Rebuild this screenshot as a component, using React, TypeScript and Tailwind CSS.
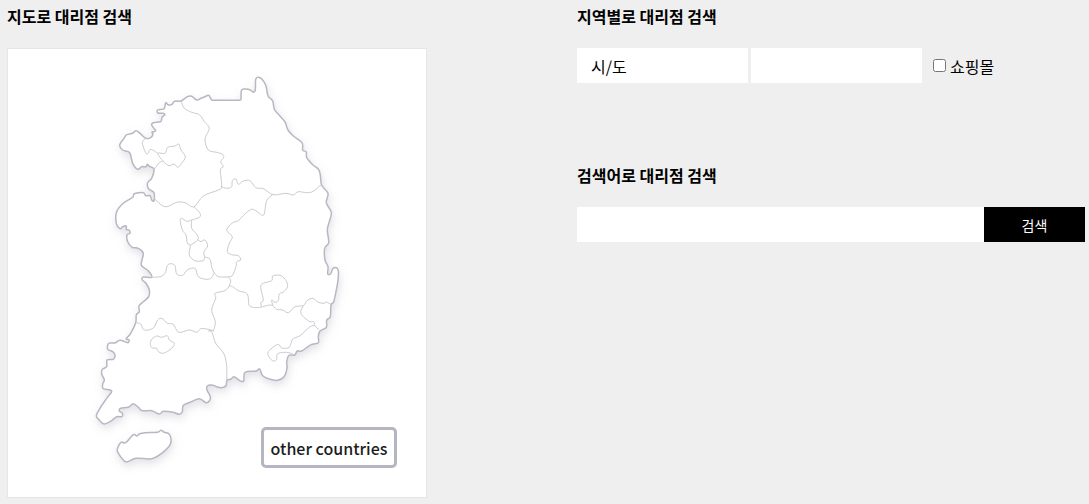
import React from "react";

const MAINLAND =
  "145.7,138.3 150.7,137.7 153,134.3 152,132.3 155.7,130.7 151.7,125.3 153.3,122.7 160.7,121.7 162,117.3 164.7,115 163.3,113.3 158,113 157.7,110 164,108.7 165.7,102.7 168,104.7 171.7,104.7 174.7,101.3 181,101 187.3,96.7 191.7,96.3 196.7,100 201,98.3 205,96.7 208.7,95.3 211.5,99.8 214,100.2 226,100.2 239.3,100.2 241,98.3 241.3,90.7 244,89 248.3,89.3 251.3,90.7 253.3,92.3 255.3,90 255.7,79.3 258.3,77.3 262,79.3 266,86 268,96 272.7,101 274.3,109.3 279.3,115.3 285,122 288,130 293.3,136 302,142.7 302.7,150 306.3,152 306.7,157.7 312.7,164.7 318.3,169 320.3,175 321.7,185.3 328,193.3 326.3,202.7 331.3,212.3 329.3,221.7 327.3,230 328.7,242.7 324.7,248.3 325,260 328,266.7 327.7,274 330.7,273.7 332.7,268.7 336.3,267.7 338.3,270.7 338,280 336,291.7 333.7,301.7 331,305 330.3,316.7 326.7,320 326.3,327.3 320,331 318.3,336.7 318.3,342.7 311,344.7 301.7,351 297.3,351 294.7,355 289,355.3 286.7,361.7 287,368.3 284,376.7 277.7,380.3 270,379.3 262.7,375.7 259.7,369 256,371 245,372.3 243.7,381 240,380.7 234,376.7 230.7,379.3 227,380 226,385.7 221.7,387.7 216.7,386.7 211.7,385 207.3,386 207,390 210.3,396.7 209.3,401 206,402.7 199.3,398.7 190,402.3 183.3,405.3 182.3,411.7 179.3,414.3 173.3,412.3 163.3,411.3 159.3,414 151.7,410.7 142.3,410.7 138.3,407.3 133.3,403.7 128.3,407.3 120.7,408.3 119.3,411 122.3,413.3 121.7,416.7 116.7,416.7 110,421.7 104,424 100,420.7 96.3,416 100,408.3 106.7,398.3 111.7,391 103.3,388.7 102.7,384 104.3,380 101.7,374 102.3,369.3 106.7,366.7 107,360 113.3,359.3 115,355 112.7,351.7 107.7,349.3 108.7,343.3 115,343 120,340.3 127.7,342.7 129,340 126.3,338.7 130.7,333.3 135.7,322.7 136.3,315 139.3,311.7 139,306 143.3,301.7 148.7,296.7 149.3,290 146,283.3 142.3,280 143.3,277 151.7,277.3 148.3,270.7 141.3,265 143.3,253.3 138.3,248.3 132.3,247.3 127.7,241.7 127,235 130,233.3 129,230 126.3,229.3 126.3,226 122.7,226.7 120,228.7 116.3,223.3 116.7,211.7 123.3,203.3 132.7,197.3 134.3,193.7 143.3,192.7 145.7,195.7 150,195.7 151.7,200 154,200.7 154,192.7 149,189.3 147.3,185 148.3,181.7 151.7,178.3 154,169 150,166.7 147.3,164.3 146,166.7 141.7,166.7 137.7,169.3 132.7,163.3 129.7,152.7 122.7,150 119.7,145 124,138.3 126.7,134.7 132.7,133.3 136,130.7 140,133.3";

const JEJU =
  "117.3,449.3 121,442.3 125.7,442.7 133.3,434.7 136.7,436 139.3,434 145,432.7 157.3,432.3 161,430.3 164.3,432.3 168.3,433.3 170.7,437.3 170.3,444.3 161.7,453.3 151.7,458.7 136,458.3 126.7,462 122.7,459.3 118,452.7";

const GWANGJU =
  "150.3,343.3 152,339 156.7,336 161.7,337.3 167.3,335.7 169.3,340 174.3,343.3 171.7,348.3 163.3,353.3 157.7,351 156.7,348.3 151.7,347.7";

const SEOUL =
  "157.7,153.3 165,153.3 167.7,147.3 175,146 178.7,144 181,150 185.3,156.7 181.7,163.3 177.7,167.3 174,164 169,165.7 163.3,161.3";

const BORDERS = [
  "181,101 184.3,108.3 191.7,112.3 199.3,114.7 204.3,121.7 209.3,128.3 205,139.3 208.3,150 216.7,152.3 222.3,154.3 223.7,157.3 220.7,161.7 223.3,166.7 220.3,170 221.7,186 218.3,190 203.3,196 194,206.7 185,202.7 176.7,202.3 165,206.7 154,198.3",
  "221.3,186.7 226.7,188.3 231.7,186.7 232.3,180.7 236,179 238.3,184.3 243.3,181 250,180.7 255.7,187.7 263.3,188.7 273.3,194.7 286,193.3 293.3,195 298.3,191.7 306.7,192.7 313.3,191.3 320,185.7 321.7,185.7",
  "273.3,194 266.7,200.7 263.7,215 257.3,211.7 251.7,209.3 245,214 238.3,220.7 232.7,222.7 226.7,230 232.3,236.7 229.3,243.3 227.3,251.7 231.7,254.7 238.3,255.7 240.7,260 236.7,261.7 236,266.7 232.3,275.7 228.3,277 230.7,280 229.3,286",
  "229.3,286 232.7,286.7 238.3,290.7 247.3,294 249,305 253.3,307.3 260,307.3 271,305 276.7,309.3 282.7,310 288.3,312.7 295,306.7 303.3,305.7 306.7,301 312.7,298.3 318.3,302.3 324.3,303.3 326,302 331,304.3",
  "261.7,306.7 260.7,302.7 263.3,300 260.7,287.3 263.3,283.3 271.7,280.7 272.7,276 280,275.3 285,279.3 287.7,285.7 284,291.7 279.3,294 278.3,300.7 275,302.3 271.7,300 272.7,305",
  "303.3,305.7 300.7,311.7 303.3,316.7 310,321.7 314,321.7 314.7,325.7 319.3,330",
  "314.7,325.7 310,326.7 300,335.7 292.7,339 289.3,347.3 281.7,348 277.7,344.3 268.3,351.7 269.3,357.3 273.3,361 276.7,359.3 277.3,354 284,352.3 289,352.7 293,354",
  "229.3,286 225,290.7 215,293.3 215.7,298.3 211.7,310 215.3,321.7 213.3,330 208.3,331",
  "208.3,329.5 212,332.5 215.7,343.3 224,354 226.7,366.7 226.7,379.3",
  "136.3,322.7 140.7,324 143.3,329.3 148.3,330 154,327.3 157.7,320 162,318.3 167.3,323.3 173.3,324.3 178.7,332.3 189.3,330 196.7,332.3 200.7,328.7 206.7,329 214,331",
  "151.7,277.3 160,276.7 165,273.3 167.3,265.7 170.7,263.7 175,265.7 176.7,274 182.7,275.3 187.3,270 195,268.3 198.3,276.7 206.7,279.3 211.7,277.7 214.3,273.3 218.3,276.7 228.3,277",
  "194,206.7 200,213.3 199.3,217.3 191.7,220 186.7,221.3 181.7,218.3 180.3,220.7 182.3,230 186,235 187.3,243.3 190.3,245.3 189.3,255 195,260.7 203.3,260.7 204.7,257.3 210,259.3 211.7,267.3 214.3,273.3",
  "191.7,220 191.7,228.3 197.3,235 197.7,240 190.3,245.3",
  "197.7,240 201,241.5 205,240 207.7,246 204,251.7 204.7,257.3",
  "145.7,138.3 142.3,142.7 145.7,152.7 147.7,153.7 150.7,149.3 157.7,153.3",
  "163.3,161.3 159.3,162.7 154.3,169",
];

/** Turns a list of "x,y" pairs into a smooth curve through every point. */
function curve(list: string, closed = false): string {
  const pts = list.split(" ").map((p) => p.split(",").map(Number));
  const n = pts.length;
  const at = (i: number) =>
    closed ? pts[(i + n) % n] : pts[Math.max(0, Math.min(n - 1, i))];
  let d = `M${pts[0][0]} ${pts[0][1]}`;
  for (let i = 0; i < (closed ? n : n - 1); i++) {
    const [a, b, c, e] = [at(i - 1), at(i), at(i + 1), at(i + 2)];
    const c1 = [b[0] + (c[0] - a[0]) / 6, b[1] + (c[1] - a[1]) / 6];
    const c2 = [c[0] - (e[0] - b[0]) / 6, c[1] - (e[1] - b[1]) / 6];
    d += `C${c1[0]} ${c1[1]} ${c2[0]} ${c2[1]} ${c[0]} ${c[1]}`;
  }
  return closed ? d + "Z" : d;
}

function KoreaMap() {
  return (
    <svg
      viewBox="8 49 418 448"
      className="block h-auto w-full"
      role="img"
      aria-labelledby="map-title"
      fill="none"
      strokeLinejoin="round"
    >
      <defs>
        <filter id="land-shadow" x="-10%" y="-10%" width="120%" height="125%">
          <feDropShadow dx="1" dy="4" stdDeviation="4" floodColor="#8c8ea3" floodOpacity="0.25" />
        </filter>
      </defs>
      <g fill="#fff" stroke="#b7b8c3" strokeWidth="1.5" filter="url(#land-shadow)">
        <path d={curve(MAINLAND, true)} />
        <path d={curve(JEJU, true)} />
      </g>
      <g stroke="#cbcbd0" strokeWidth="1">
        {BORDERS.map((b) => (
          <path key={b} d={curve(b)} />
        ))}
        <path d={curve(GWANGJU, true)} />
        <path d={curve(SEOUL, true)} />
      </g>
    </svg>
  );
}

function Heading({ id, children }: { id?: string; children: React.ReactNode }) {
  return (
    <h2 id={id} className="mb-5 text-base leading-6 font-bold">
      {children}
    </h2>
  );
}

const SELECT =
  "h-[35px] min-w-0 max-w-[171px] flex-1 appearance-none rounded-none bg-white px-[14px] text-base text-black";

export default function App() {
  return (
    <main className="grid min-h-screen content-start gap-y-8 bg-[#efefef] pt-1 pr-1 pb-1.5 pl-[7px] font-['Noto_Sans_CJK_KR',sans-serif] text-black md:grid-cols-[570fr_508fr]">
      <section>
        <Heading id="map-title">지도로 대리점 검색</Heading>
        <div className="relative w-full max-w-[420px] border border-[#e5e5ea] bg-white">
          <KoreaMap />
          <a
            href="#other-countries"
            className="absolute right-[29px] bottom-[29px] flex h-[41px] w-[136px] items-center justify-center rounded-[5px] border-3 border-[#b5b6c1] bg-white text-base leading-6 font-medium whitespace-nowrap text-[#1c1c1c]"
          >
            other countries
          </a>
        </div>
      </section>

      <div className="flex flex-col gap-20">
        <section>
          <Heading>지역별로 대리점 검색</Heading>
          <form className="flex items-center gap-[3px]">
            <select aria-label="시/도" className={SELECT}>
              <option>시/도</option>
            </select>
            <select aria-label="시/군/구" className={SELECT}>
              <option></option>
            </select>
            <label className="ml-2 flex items-center gap-1 text-base leading-6 whitespace-nowrap">
              <input type="checkbox" className="size-[13px]" />
              쇼핑몰
            </label>
          </form>
        </section>

        <section>
          <Heading>검색어로 대리점 검색</Heading>
          <form className="flex">
            <input
              type="text"
              aria-label="검색어"
              className="h-[35px] min-w-0 flex-1 bg-white px-[14px] text-base"
            />
            <button type="button" className="h-[35px] w-[101px] bg-black text-sm text-white">
              검색
            </button>
          </form>
        </section>
      </div>
    </main>
  );
}
